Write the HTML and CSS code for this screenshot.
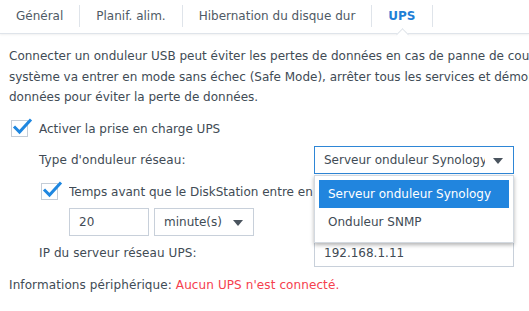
FILE: index.html
```html
<!DOCTYPE html>
<html lang="fr">
<head>
  <meta charset="UTF-8" />
  <title>UPS</title>
  <link rel="stylesheet" href="styles.css">
</head>
<body>

  <div class="tabs">
    <div class="tab">Général</div>
    <span class="sep"></span>
    <div class="tab">Planif. alim.</div>
    <span class="sep"></span>
    <div class="tab">Hibernation du disque dur</div>
    <span class="sep"></span>
    <div class="tab active">UPS</div>
    <span class="sep"></span>
  </div>

  <div class="content">
    <p class="desc">
      <span>Connecter un onduleur USB peut éviter les pertes de données en cas de panne de courant. Le</span>
      <span>système va entrer en mode sans échec (Safe Mode), arrêter tous les services et démonter les volumes de</span>
      <span>données pour éviter la perte de données.</span>
    </p>

    <label class="check-row">
      <span class="checkbox">
        <svg viewBox="0 0 22 20" width="22" height="20"><path d="M3 9.5 L8.5 15 L20 2.5" fill="none" stroke="#1f87e0" stroke-width="3"/></svg>
      </span>
      Activer la prise en charge UPS
    </label>

    <div class="sub">
      <div class="field-row">
        <span class="label">Type d'onduleur réseau:</span>
        <div class="select wide focus">
          <span class="select-text">Serveur onduleur Synology</span>
          <span class="arrow"></span>
          <ul class="menu">
            <li class="selected">Serveur onduleur Synology</li>
            <li>Onduleur SNMP</li>
          </ul>
        </div>
      </div>

      <label class="field-row check-inner">
        <span class="checkbox">
          <svg viewBox="0 0 22 20" width="22" height="20"><path d="M3 9.5 L8.5 15 L20 2.5" fill="none" stroke="#1f87e0" stroke-width="3"/></svg>
        </span>
        <span class="clip">Temps avant que le DiskStation entre en</span>
      </label>

      <div class="field-row inputs">
        <div class="input small">20</div>
        <div class="select unit">
          <span class="select-text">minute(s)</span>
          <span class="arrow"></span>
        </div>
      </div>

      <div class="field-row">
        <span class="label">IP du serveur réseau UPS:</span>
        <div class="input wide">192.168.1.11</div>
      </div>
    </div>

    <p class="info">Informations périphérique: <span class="error">Aucun UPS n'est connecté.</span></p>
  </div>

</body>
</html>
```

FILE: styles.css
```css
* {
  box-sizing: border-box;
  margin: 0;
  padding: 0;
}

body {
  font-family: "DejaVu Sans", Verdana, sans-serif;
  font-size: 12px;
  color: #414b55;
  background: #fff;
  width: 529px;
  height: 311px;
  overflow: hidden;
}

.tabs {
  display: flex;
  align-items: center;
  height: 34px;
  border-bottom: 1px solid #dfe4ea;
  box-shadow: 0 1px 2px rgba(0, 0, 0, 0.06);
  white-space: nowrap;
}

.tab {
  padding: 0 16px 2px;
  color: #4f5a65;
  position: relative;
  height: 34px;
  display: flex;
  align-items: center;
}

.tab.active {
  color: #1f7fd6;
  font-weight: bold;
}

.tab.active::after {
  content: "";
  position: absolute;
  left: 50%;
  bottom: -1px;
  width: 8px;
  height: 8px;
  margin-left: -4px;
  background: #fff;
  border-left: 1px solid #dfe4ea;
  border-top: 1px solid #dfe4ea;
  transform: translateY(4px) rotate(45deg);
}

.sep {
  width: 1px;
  height: 22px;
  background: #dfe4ea;
  margin-bottom: 2px;
}

.content {
  padding: 12px 9px 0;
}

.desc {
  line-height: 20.5px;
  width: 520px;
  overflow: hidden;
}

.desc span {
  display: block;
  white-space: nowrap;
}

.check-row {
  display: flex;
  align-items: center;
  height: 20px;
  margin-top: 11px;
}

.checkbox {
  position: relative;
  width: 17px;
  height: 17px;
  border: 1px solid #c5cdd7;
  background: #fff;
  margin: 0 11px 0 2px;
  flex: none;
}

.checkbox svg {
  position: absolute;
  left: -1px;
  top: -4px;
}

.sub {
  padding-left: 30px;
  margin-top: 7px;
}

.field-row {
  display: flex;
  align-items: center;
  height: 28px;
  margin-bottom: 3px;
  white-space: nowrap;
}

.check-inner {
  padding-top: 2px;
}

.clip {
  width: 245px;
  overflow: hidden;
}

.label {
  width: 275px;
  flex: none;
  letter-spacing: 0.1px;
}

.select,
.input {
  height: 28px;
  border: 1px solid #c8d0da;
  background: #fff;
  display: flex;
  align-items: center;
  padding-left: 9px;
  position: relative;
  flex: none;
}

.wide {
  width: 200px;
}

.select.focus {
  border-color: #2e86d6;
}

.select-text {
  overflow: hidden;
  white-space: nowrap;
}

.wide .select-text {
  width: 161px;
}

.arrow {
  position: absolute;
  right: 10px;
  top: 11px;
  width: 0;
  height: 0;
  border-left: 5px solid transparent;
  border-right: 5px solid transparent;
  border-top: 6px solid #4a545e;
}

.inputs {
  padding-left: 30px;
}

.small {
  width: 80px;
}

.unit {
  width: 100px;
  margin-left: 5px;
}

.menu {
  list-style: none;
  position: absolute;
  left: -1px;
  top: 28px;
  width: 200px;
  padding: 4px 4px 6px;
  background: #fff;
  border: 1px solid #d3d9e0;
  box-shadow: 0 2px 4px rgba(0, 0, 0, 0.3);
  z-index: 10;
}

.menu li {
  height: 28px;
  line-height: 28px;
  padding-left: 9px;
  color: #414b55;
}

.menu li.selected {
  background: #2185de;
  color: #fff;
}

.info {
  line-height: 20px;
  margin-top: 8px;
  white-space: nowrap;
  letter-spacing: 0.1px;
}

.error {
  color: #f5404e;
}
```
